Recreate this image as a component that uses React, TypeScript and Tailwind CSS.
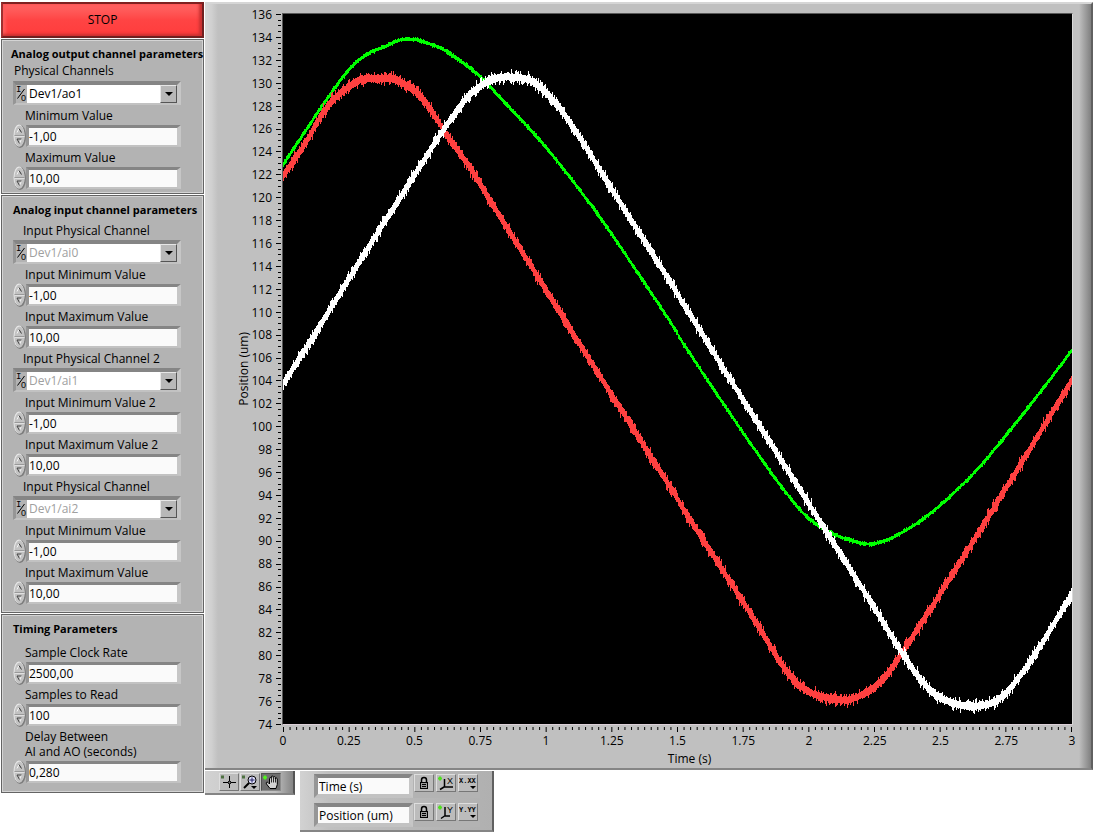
import { useId } from 'react'
import type { ReactNode } from 'react'

type Point = [number, number]

const PLOT_W = 790
const PLOT_H = 710

const Y_LABELS = Array.from({ length: 32 }, (_, i) => 136 - i * 2)
const X_LABELS = Array.from({ length: 13 }, (_, i) => i * 0.25)

const GREEN: Point[] = [
  [0, 150], [22, 117], [42, 87], [67, 54], [84, 40], [100, 33], [117, 26], [127, 25],
  [137, 27], [157, 34], [184, 52], [200, 66], [217, 84], [257, 127], [287, 164],
  [317, 204], [347, 248], [377, 293], [407, 339], [437, 384], [467, 428], [497, 470],
  [517, 495], [527, 505], [547, 518], [567, 526], [585, 530], [602, 527], [622, 517],
  [642, 504], [667, 483], [697, 453], [727, 417], [757, 379], [789, 337],
]

const RED: Point[] = [
  [0, 161], [20, 132], [42, 95], [57, 79], [77, 66], [90, 65], [110, 65], [124, 72],
  [137, 82], [150, 100], [164, 122], [184, 150], [207, 187], [262, 275], [317, 363],
  [397, 489], [467, 598], [492, 639], [507, 661], [522, 675], [537, 682], [562, 686],
  [577, 682], [592, 673], [607, 657], [622, 635], [657, 581], [697, 517], [737, 452],
  [762, 411], [789, 367],
]

const WHITE: Point[] = [
  [0, 369], [27, 327], [77, 246], [117, 183], [159, 117], [172, 99], [187, 80],
  [202, 69], [214, 64], [237, 64], [250, 68], [262, 78], [277, 95], [292, 117],
  [337, 189], [397, 284], [457, 380], [517, 475], [577, 570], [619, 638], [637, 664],
  [650, 678], [665, 687], [687, 692], [707, 690], [720, 682], [732, 669], [752, 641],
  [789, 581],
]

// Catmull-Rom through the sampled points
function valueAt(points: Point[], x: number) {
  let i = 0
  while (i < points.length - 2 && points[i + 1][0] <= x) i++
  const p1 = points[i]
  const p2 = points[i + 1]
  const p0 = points[i - 1] ?? p1
  const p3 = points[i + 2] ?? p2
  const dx = p2[0] - p1[0]
  const t = (x - p1[0]) / dx
  const m1 = ((p2[1] - p0[1]) / (p2[0] - p0[0])) * dx
  const m2 = ((p3[1] - p1[1]) / (p3[0] - p1[0])) * dx
  const t2 = t * t
  const t3 = t2 * t
  return (
    (2 * t3 - 3 * t2 + 1) * p1[1] + (t3 - 2 * t2 + t) * m1 + (3 * t2 - 2 * t3) * p2[1] + (t3 - t2) * m2
  )
}

// A filled, stepped band around the curve, with repeatable noise.
// Steep stretches get a taller band so the line keeps its weight.
function tracePath(points: Point[], base: number, noise: number, seed: number) {
  let s = seed
  const rand = () => {
    s = (s * 16807) % 2147483647
    return s / 2147483647
  }
  const upper: string[] = []
  const lower: string[] = []
  for (let x = 0; x < PLOT_W; x++) {
    const y = valueAt(points, x)
    const slope = Math.abs(valueAt(points, x + 1) - y)
    const half = base + slope * 0.6
    const top = Math.round(y - half - rand() * rand() * noise)
    const bottom = Math.max(Math.round(y + half + rand() * rand() * noise), top + 2)
    upper.push(`${x} ${top}L${x + 1} ${top}`)
    lower.unshift(`${x + 1} ${bottom}L${x} ${bottom}`)
  }
  return `M${upper.join('L')}L${lower.join('L')}Z`
}

const TRACES = [
  { color: '#00ff00', d: tracePath(GREEN, 1.2, 2, 71) },
  { color: '#ff4040', d: tracePath(RED, 3, 6, 1234) },
  { color: '#ffffff', d: tracePath(WHITE, 3, 6, 987) },
]

function Panel({ title, children }: { title: ReactNode; children: ReactNode }) {
  return (
    <section className="border border-[#646464] bg-[#b3b3b3] px-[9px] pt-[6px] shadow-[inset_1px_1px_0_#d4d4d4,inset_-1px_-1px_0_#d4d4d4]">
      <h2 className="h-4 text-[11px] leading-4 font-bold whitespace-nowrap">{title}</h2>
      {children}
    </section>
  )
}

function Spinner() {
  return (
    <svg width="13" height="24" viewBox="0 0 13 24" className="shrink-0" aria-hidden="true">
      <ellipse cx="7" cy="12.500" rx="6" ry="11.500" fill="#7c7c7c" />
      <ellipse cx="6" cy="11.500" rx="5.500" ry="11" fill="#e8e8e8" />
      <ellipse cx="6.500" cy="12" rx="5" ry="10.500" fill="#c2c2c2" />
      <path d="M1.500 11.500h10" stroke="#999" />
      <path d="M1.500 12.500h10" stroke="#e0e0e0" />
      <path d="M4 8.500L6 4.500" fill="none" stroke="#f4f4f4" />
      <path d="M6 4.500L8.500 8.500" fill="none" stroke="#333" />
      <path d="M8.500 15L6.500 19.500" fill="none" stroke="#f4f4f4" />
      <path d="M8.500 15H4l2.500 4.500" fill="none" stroke="#444" />
    </svg>
  )
}

function NumberField({ label, value }: { label: ReactNode; value: string }) {
  const id = useId()
  return (
    <div className="mb-[3px]">
      <label htmlFor={id} className="mb-[2px] ml-[12px] block text-[12px] leading-[15px] whitespace-nowrap">
        {label}
      </label>
      <div className="flex h-[22px] items-center">
        <Spinner />
        <input
          id={id}
          defaultValue={value}
          className="h-[22px] w-[155px] border-t-3 border-r-4 border-b-2 border-l-3 border-t-[#858585] border-r-[#c6c6c6] border-b-[#c2c2c2] border-l-[#969696] bg-[#fafafa] text-[12px] leading-4 outline-none"
        />
      </div>
    </div>
  )
}

function ChannelSelect({ label, value, disabled }: { label: string; value: string; disabled?: boolean }) {
  const id = useId()
  return (
    <div className="mb-[3px]">
      <label
        htmlFor={id}
        className={
          disabled
            ? 'mb-px ml-[10px] block text-[12px] leading-4 whitespace-nowrap'
            : 'mb-[2px] ml-px block text-[12px] leading-4 whitespace-nowrap'
        }
      >
        {label}
      </label>
      <div className="flex h-6 w-[168px] border-t-4 border-r-4 border-b-2 border-l-3 border-t-[#858585] border-r-[#c6c6c6] border-b-[#c2c2c2] border-l-[#969696] bg-[#b3b3b3]">
        <svg width="11" height="18" viewBox="0 0 11 18" aria-hidden="true">
          <text x="0" y="7" fontSize="9" fontFamily="Liberation Mono, monospace">I</text>
          <path d="M1.500 13.500L8.500 4" stroke="#000" />
          <text x="5" y="16" fontSize="9" fontFamily="Liberation Sans, sans-serif">0</text>
        </svg>
        <div className="relative flex-1 bg-white">
          <select
            id={id}
            disabled={disabled}
            defaultValue={value}
            className="block h-[18px] w-full appearance-none pl-[2px] text-[12px] leading-[18px] text-black opacity-100 outline-none disabled:text-[#a0a0a0]"
          >
            <option>{value}</option>
          </select>
          <span className="pointer-events-none absolute top-0 right-0 flex h-[18px] w-[17px] items-center justify-center border border-t-[#e6e6e6] border-r-[#555] border-b-[#555] border-l-[#e6e6e6] bg-[#b8b8b8]">
            <svg width="8" height="4" viewBox="0 0 8 4" aria-hidden="true">
              <path d="M0 0h8L4 4z" />
            </svg>
          </span>
        </div>
      </div>
    </div>
  )
}

function Graph() {
  return (
    <section className="border-t-2 border-r-2 border-b-2 border-t-[#d6d6d6] border-r-[#606060] border-b-[#858585] bg-[#c0c0c0]">
      <div className="flex h-[764px]">
        <div className="w-[13px] shrink-0 bg-linear-to-r from-[#d8d8d8] via-[#d0d0d0] to-[#c0c0c0]" />
        <div className="grid flex-1 grid-cols-[16px_20px_10px_1fr] grid-rows-[712px_1fr] pt-[9px] pl-[18px]">
          <div className="flex items-center justify-center">
            <span className="rotate-180 text-[12px] leading-4 [writing-mode:vertical-rl]">Position (um)</span>
          </div>
          <div className="flex h-[712px] flex-col justify-between pt-[2px] text-right text-[12px]">
            {Y_LABELS.map((v) => (
              <div key={v} className="flex h-0 items-center justify-end">{v}</div>
            ))}
          </div>
          <svg width="10" height="714" viewBox="0 0 10 714" shapeRendering="crispEdges" aria-hidden="true">
            {Array.from({ length: 125 }, (_, i) => (
              <path key={i} d={`M${i % 4 ? 6 : 4} ${1.5 + (i * 710) / 124}H9`} stroke="#000" />
            ))}
          </svg>
          <div className="border border-t-[#5a5a5a] border-r-[#d8d8d8] border-b-[#dcd0d8] border-l-[#5a5a5a] bg-black">
            <svg
              className="block h-[710px] w-full"
              viewBox={`0 0 ${PLOT_W} ${PLOT_H}`}
              preserveAspectRatio="none"
              shapeRendering="crispEdges"
              role="img"
              aria-label="Position (um) against Time (s)"
            >
              {TRACES.map((t) => (
                <path key={t.color} d={t.d} fill={t.color} />
              ))}
            </svg>
          </div>
          <div className="col-start-4 px-px pt-[2px]">
            <svg
              className="block h-[5px] w-full overflow-visible"
              viewBox="0 0 790 5"
              preserveAspectRatio="none"
              shapeRendering="crispEdges"
              aria-hidden="true"
            >
              {Array.from({ length: 121 }, (_, i) => (
                <path key={i} d={`M${0.5 + (i * 789) / 120} 0V${i % 10 ? 3 : 5}`} stroke="#000" />
              ))}
            </svg>
            <div className="mt-px flex h-4 justify-between text-[12px] leading-4">
              {X_LABELS.map((v) => (
                <div key={v} className="flex w-0 justify-center">{v}</div>
              ))}
            </div>
            <div className="mt-[2px] pl-6 text-center text-[12px] leading-4">Time (s)</div>
          </div>
        </div>
        <div className="ml-[6px] w-[12px] shrink-0 bg-linear-to-r from-[#c0c0c0] to-[#808080]" />
      </div>
    </section>
  )
}

function ToolButton({ label, active, children }: { label: string; active?: boolean; children: ReactNode }) {
  return (
    <button
      type="button"
      aria-label={label}
      className={
        active
          ? 'flex h-[18px] w-5 items-center justify-center border border-t-[#505050] border-r-[#8c8c8c] border-b-[#8c8c8c] border-l-[#505050] bg-[#6e6e6e]'
          : 'flex h-[18px] w-5 items-center justify-center border border-t-[#dedede] border-r-[#777] border-b-[#777] border-l-[#dedede] bg-[#bcbcbc]'
      }
    >
      <svg width="18" height="16" viewBox="0 0 18 16" fill="none" stroke="#000" aria-hidden="true">
        {children}
      </svg>
    </button>
  )
}

function GraphPalette() {
  return (
    <div className="flex h-6 w-[90px] items-center gap-px border-r-2 border-b-2 border-r-[#555] border-b-[#858585] bg-linear-to-r from-[#d2d2d2] via-[#c0c0c0] via-80% to-[#858585] pl-[14px]">
      <ToolButton label="Cursor">
        <path d="M1 3h3" stroke="#4d7040" strokeWidth="3" />
        <path d="M9.500 2v12M3 8.500h13" />
        <rect x="8" y="7" width="3" height="3" fill="#888" stroke="none" />
        <path d="M8 7.500h3M8 9.500h3M8.500 7v3M10.500 7v3" strokeWidth=".6" />
      </ToolButton>
      <ToolButton label="Zoom">
        <path d="M1 3h3" stroke="#4d7040" strokeWidth="3" />
        <circle cx="11" cy="6" r="4" fill="#ddddf8" />
        <path d="M8.500 6h5M11 3.500v5" stroke="#222266" />
        <path d="M8 9l-5 5" strokeWidth="2" />
        <path d="M10 12h6l-3 3z" fill="#000" stroke="none" />
      </ToolButton>
      <ToolButton label="Pan" active>
        <path
          d="M8 14.500L4.500 10c-1-1.500.5-2.500 1.500-1.500l1.500 1.500V4.500c0-1.300 1.800-1.300 1.800 0V3c0-1.300 2-1.300 2 0v.5c0-1.300 2-1.300 2 0V5c0-1.300 2-1.300 2 0v5.500L14 14.500z"
          fill="#d4d4d4"
        />
        <path d="M9.500 4.500v4M11.500 3.500v5M13.500 4.500v4" strokeWidth=".8" />
        <path d="M1 3.500h4M3 1.500v4" stroke="#50f020" strokeWidth="2" />
      </ToolButton>
    </div>
  )
}

function ScaleRow({ name, axis }: { name: string; axis: 'X' | 'Y' }) {
  return (
    <div className="flex h-6 w-[166px] bg-[#b3b3b3]">
      <input
        aria-label={`${axis} scale name`}
        defaultValue={name}
        className="h-6 w-[99px] border-4 border-t-[#858585] border-r-[#c6c6c6] border-b-[#c2c2c2] border-l-[#969696] bg-[#fafafa] pl-px text-[12px] leading-4 outline-none"
      />
      <div className="flex gap-[2px] pl-px">
        <ToolButton label={`Lock ${axis} scale`}>
          <path d="M6.500 7V5a2.500 2.500 0 0 1 5 0v2" strokeWidth="1.500" />
          <rect x="5.500" y="7.500" width="7" height="6" fill="#999" />
          <path d="M7 9.500h4M7 11.500h4" />
        </ToolButton>
        <ToolButton label={`Autoscale ${axis}`}>
          <path d="M1 3.500h4M3 1.500v4" stroke="#50e020" strokeWidth="2" />
          {axis === 'X' ? (
            <path d="M7.500 4v8H16M7 12l-4 2.500" strokeWidth="1.500" />
          ) : (
            <path d="M8 3v9h5M7.500 12l-3.500 2.500" strokeWidth="1.500" />
          )}
          <text x="10" y="9" fontSize="9" fontFamily="Liberation Sans, sans-serif" fill="#000" stroke="none">
            {axis}
          </text>
        </ToolButton>
        <ToolButton label={`${axis} scale format`}>
          <text x="0" y="8" fontSize="7" fontFamily="Liberation Mono, monospace" fontWeight="bold" fill="#000" stroke="none">
            {axis === 'X' ? 'X.XX' : 'Y.YY'}
          </text>
          <path d="M11 11h6l-3 3z" fill="#000" stroke="none" />
        </ToolButton>
      </div>
    </div>
  )
}

function ScaleLegend() {
  return (
    <div className="flex h-[61px] w-[194px] flex-col gap-[5px] border-r-2 border-b-2 border-r-[#606060] border-b-[#858585] bg-linear-to-r from-[#d2d2d2] via-[#c0c0c0] via-15% to-[#b0b0b0] pt-[3px] pl-[14px]">
      <ScaleRow name="Time (s)" axis="X" />
      <ScaleRow name="Position (um)" axis="Y" />
    </div>
  )
}

export default function App() {
  return (
    <main className="flex items-start bg-white pt-[2px] pr-[2px] pl-px font-['Open_Sans','Noto_Sans',sans-serif] text-black">
      <aside className="flex w-[203px] shrink-0 flex-col gap-px">
        <button
          type="button"
          className="h-9 border-2 border-t-[#802020] border-r-[#702020] border-b-[#702020] border-l-[#a03030] bg-linear-to-b from-[#ff6666] via-[#ff4444] to-[#ff3c3c] text-[12px] shadow-[inset_-3px_-2px_3px_#c83030,inset_3px_2px_3px_#ff5a5a]"
        >
          STOP
        </button>

        <Panel title="Analog output channel parameters">
          <div className="mt-px ml-[2px] pb-px">
            <ChannelSelect label="Physical Channels" value="Dev1/ao1" />
            <NumberField label="Minimum Value" value="-1,00" />
            <NumberField label="Maximum Value" value="10,00" />
          </div>
        </Panel>

        <Panel title={<span className="pl-[2px]">Analog input channel parameters</span>}>
          <div className="mt-[5px] ml-[2px] pb-[5px]">
            <ChannelSelect label="Input Physical Channel" value="Dev1/ai0" disabled />
            <NumberField label="Input Minimum Value" value="-1,00" />
            <NumberField label="Input Maximum Value" value="10,00" />
            <ChannelSelect label="Input Physical Channel 2" value="Dev1/ai1" disabled />
            <NumberField label="Input Minimum Value 2" value="-1,00" />
            <NumberField label="Input Maximum Value 2" value="10,00" />
            <ChannelSelect label="Input Physical Channel" value="Dev1/ai2" disabled />
            <NumberField label="Input Minimum Value" value="-1,00" />
            <NumberField label="Input Maximum Value" value="10,00" />
          </div>
        </Panel>

        <Panel title={<span className="pl-[2px]">Timing Parameters</span>}>
          <div className="mt-[8px] ml-[2px] pb-[6px]">
            <NumberField label="Sample Clock Rate" value="2500,00" />
            <NumberField label="Samples to Read" value="100" />
            <NumberField
              label={
                <>
                  Delay Between
                  <br />
                  AI and AO (seconds)
                </>
              }
              value="0,280"
            />
          </div>
        </Panel>
      </aside>

      <div className="ml-px min-w-0 flex-1">
        <Graph />
        <div className="mt-px flex items-start gap-[5px]">
          <GraphPalette />
          <ScaleLegend />
        </div>
      </div>
    </main>
  )
}
